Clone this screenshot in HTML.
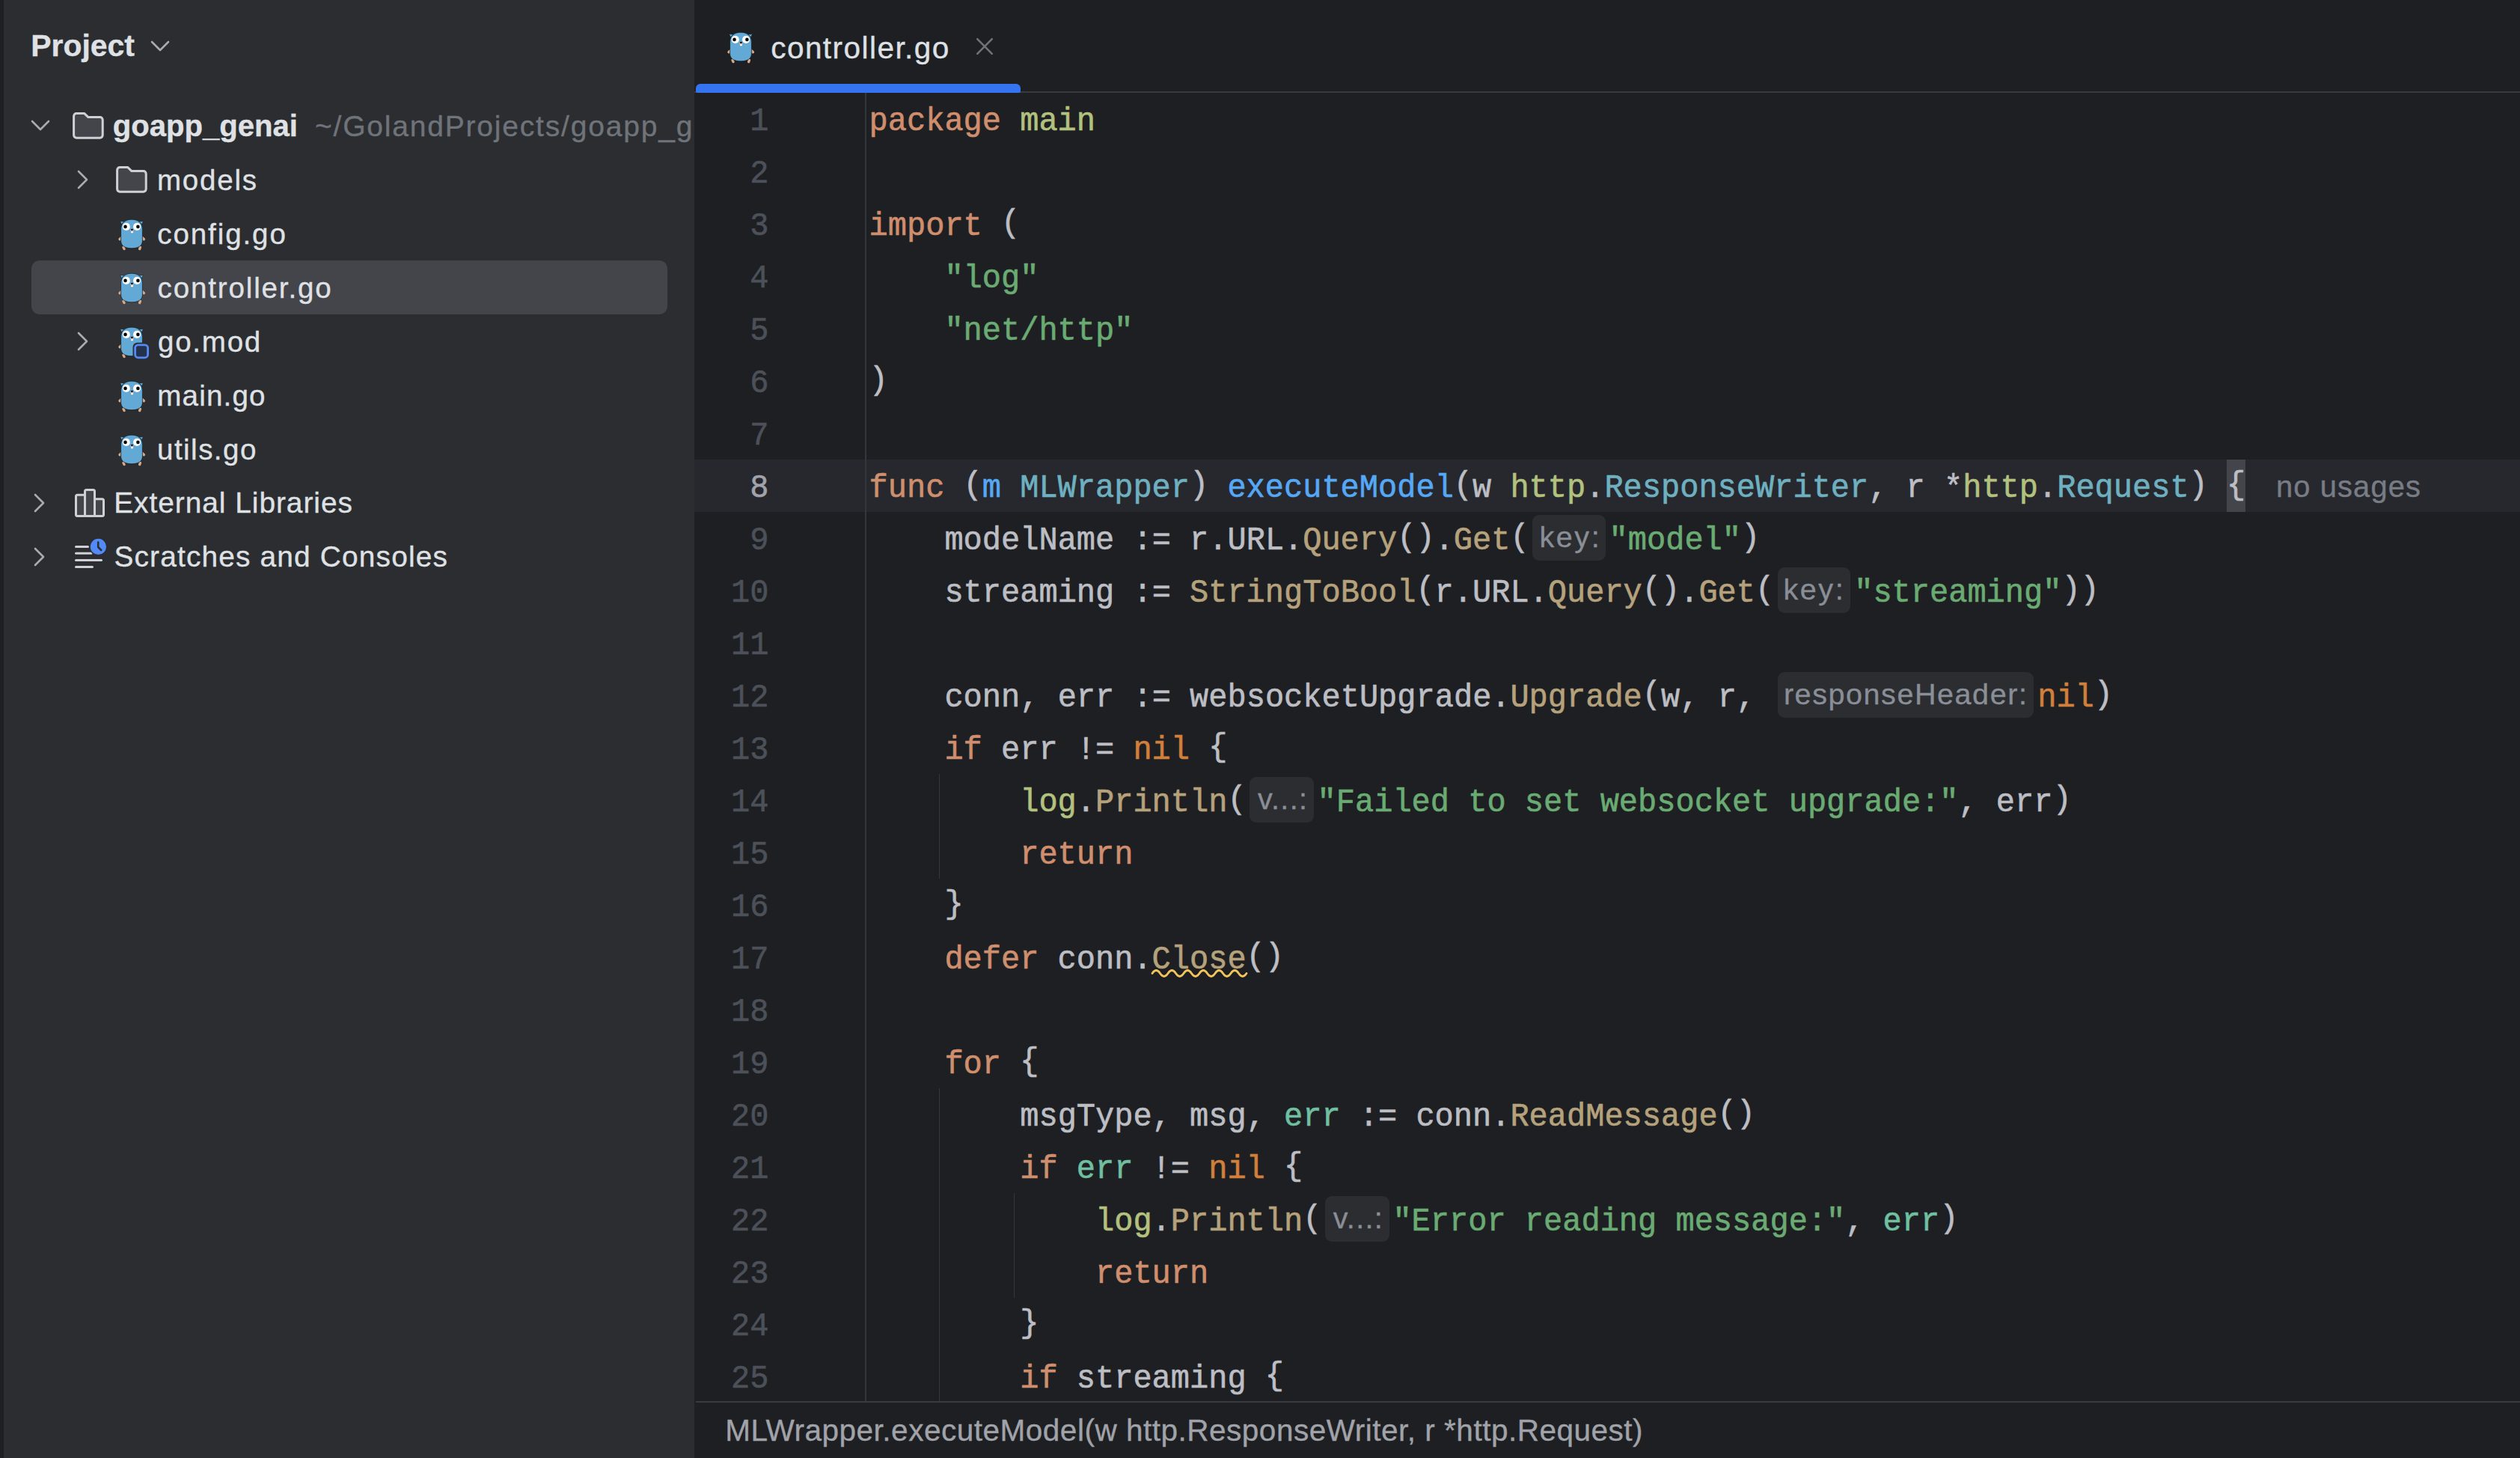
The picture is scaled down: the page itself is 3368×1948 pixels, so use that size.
<!DOCTYPE html>
<html><head><meta charset="utf-8"><style>
*{margin:0;padding:0;box-sizing:border-box}
html,body{width:3368px;height:1948px;overflow:hidden;background:#1E1F22}
body{position:relative;font-family:"Liberation Sans",sans-serif}
.a{position:absolute;white-space:pre}
.m{font-family:"Liberation Mono",monospace;font-size:42px;line-height:42px;-webkit-text-stroke:0.6px currentColor}
.s{font-family:"Liberation Sans",sans-serif;-webkit-text-stroke:0.35px currentColor}
svg{position:absolute;overflow:visible}
</style></head><body>

<div class="a" style="left:0;top:0;width:928px;height:1948px;background:#2B2D30"></div>
<div class="a" style="left:0;top:0;width:5px;height:1948px;background:#1E1F22"></div>
<div class="a s" style="left:41.3px;top:41.37px;font-size:40.9px;line-height:40.9px;color:#DFE1E5;font-weight:bold;">Project</div>
<svg style="left:201px;top:54px" width="26" height="16" viewBox="0 0 26 16"><path d="M2 2 L13 13 L24 2" fill="none" stroke="#A8ABB0" stroke-width="2.6" stroke-linecap="round" stroke-linejoin="round"/></svg>
<div class="a" style="left:42px;top:348px;width:850px;height:72px;border-radius:11px;background:#43454A"></div>
<svg style="left:41px;top:160px" width="26" height="16" viewBox="0 0 26 16"><path d="M2 2 L13 13 L24 2" fill="none" stroke="#A8ABB0" stroke-width="2.6" stroke-linecap="round" stroke-linejoin="round"/></svg>
<svg style="left:97px;top:150px" width="42" height="36" viewBox="0 0 42 36"><path d="M1.6 5.2 a3.6 3.6 0 0 1 3.6 -3.6 H15.8 L21 6.6 H36.6 a3.6 3.6 0 0 1 3.6 3.6 V30.6 a3.6 3.6 0 0 1 -3.6 3.6 H5.2 a3.6 3.6 0 0 1 -3.6 -3.6 Z" fill="#43454A" stroke="#CED0D6" stroke-width="3" stroke-linejoin="round"/></svg>
<div class="a s" style="left:150.8px;top:148.35px;font-size:40.1px;line-height:40.1px;color:#DFE1E5;font-weight:bold;">goapp_genai</div>
<div class="a" style="left:0;top:140px;width:928px;height:60px;overflow:hidden">
<div class="a s" style="left:421.0px;top:9.28px;font-size:39.0px;line-height:39.0px;color:#6F737A;letter-spacing:1.80px;">~/GolandProjects/goapp_genai</div>
</div>
<svg style="left:103px;top:227px" width="16" height="26" viewBox="0 0 16 26"><path d="M2 2 L13 13 L2 24" fill="none" stroke="#A8ABB0" stroke-width="2.6" stroke-linecap="round" stroke-linejoin="round"/></svg>
<svg style="left:155px;top:222px" width="42" height="36" viewBox="0 0 42 36"><path d="M1.6 5.2 a3.6 3.6 0 0 1 3.6 -3.6 H15.8 L21 6.6 H36.6 a3.6 3.6 0 0 1 3.6 3.6 V30.6 a3.6 3.6 0 0 1 -3.6 3.6 H5.2 a3.6 3.6 0 0 1 -3.6 -3.6 Z" fill="#43454A" stroke="#CED0D6" stroke-width="3" stroke-linejoin="round"/></svg>
<div class="a s" style="left:210.0px;top:221.70px;font-size:38.5px;line-height:38.5px;color:#DFE1E5;letter-spacing:1.77px;">models</div>
<svg style="left:158.6px;top:293.3px" width="36" height="42" viewBox="0 0 36 42"><path d="M1.6 2.4 L3.4 6.6 L6.8 3.2 Z M32.4 2.4 L30.6 6.6 L27.2 3.2 Z" fill="#62A9D6" stroke="#14181c" stroke-width="0.5"/><g stroke="#D8A886" stroke-width="3.4" stroke-linecap="round"><path d="M1 26.6 L4.2 23.9"/><path d="M30.2 23.9 L33.4 26.6"/><path d="M6 37.4 L7 39.6"/><path d="M28.4 37.4 L27.6 39.6"/></g><path d="M2.6 13.2 C2.6 4.6 8.8 0.2 17 0.2 C25.2 0.2 31.4 4.6 31.4 13.2 V28.6 C31.4 35.4 26.2 38.8 17 38.8 C7.8 38.8 2.6 35.4 2.6 28.6 Z" fill="#62A9D6" stroke="#14181c" stroke-width="0.7"/><circle cx="9.8" cy="9.9" r="5.1" fill="#fff"/><circle cx="24.1" cy="9.9" r="5.1" fill="#fff"/><circle cx="8.5" cy="9.9" r="2.3" fill="#000"/><circle cx="25.4" cy="9.9" r="2.3" fill="#000"/><rect x="16" y="15.8" width="2.9" height="2.4" fill="#fff"/><ellipse cx="17.4" cy="15.1" rx="2.5" ry="1.4" fill="#D8A886"/><ellipse cx="17.4" cy="13.8" rx="1.5" ry="1.1" fill="#000"/></svg>
<div class="a s" style="left:210.3px;top:293.70px;font-size:38.5px;line-height:38.5px;color:#DFE1E5;letter-spacing:1.91px;">config.go</div>
<svg style="left:158.6px;top:365.3px" width="36" height="42" viewBox="0 0 36 42"><path d="M1.6 2.4 L3.4 6.6 L6.8 3.2 Z M32.4 2.4 L30.6 6.6 L27.2 3.2 Z" fill="#62A9D6" stroke="#14181c" stroke-width="0.5"/><g stroke="#D8A886" stroke-width="3.4" stroke-linecap="round"><path d="M1 26.6 L4.2 23.9"/><path d="M30.2 23.9 L33.4 26.6"/><path d="M6 37.4 L7 39.6"/><path d="M28.4 37.4 L27.6 39.6"/></g><path d="M2.6 13.2 C2.6 4.6 8.8 0.2 17 0.2 C25.2 0.2 31.4 4.6 31.4 13.2 V28.6 C31.4 35.4 26.2 38.8 17 38.8 C7.8 38.8 2.6 35.4 2.6 28.6 Z" fill="#62A9D6" stroke="#14181c" stroke-width="0.7"/><circle cx="9.8" cy="9.9" r="5.1" fill="#fff"/><circle cx="24.1" cy="9.9" r="5.1" fill="#fff"/><circle cx="8.5" cy="9.9" r="2.3" fill="#000"/><circle cx="25.4" cy="9.9" r="2.3" fill="#000"/><rect x="16" y="15.8" width="2.9" height="2.4" fill="#fff"/><ellipse cx="17.4" cy="15.1" rx="2.5" ry="1.4" fill="#D8A886"/><ellipse cx="17.4" cy="13.8" rx="1.5" ry="1.1" fill="#000"/></svg>
<div class="a s" style="left:210.6px;top:365.70px;font-size:38.5px;line-height:38.5px;color:#DFE1E5;letter-spacing:1.86px;">controller.go</div>
<svg style="left:103px;top:443px" width="16" height="26" viewBox="0 0 16 26"><path d="M2 2 L13 13 L2 24" fill="none" stroke="#A8ABB0" stroke-width="2.6" stroke-linecap="round" stroke-linejoin="round"/></svg>
<svg style="left:158.6px;top:437.3px" width="36" height="42" viewBox="0 0 36 42"><path d="M1.6 2.4 L3.4 6.6 L6.8 3.2 Z M32.4 2.4 L30.6 6.6 L27.2 3.2 Z" fill="#62A9D6" stroke="#14181c" stroke-width="0.5"/><g stroke="#D8A886" stroke-width="3.4" stroke-linecap="round"><path d="M1 26.6 L4.2 23.9"/><path d="M30.2 23.9 L33.4 26.6"/><path d="M6 37.4 L7 39.6"/><path d="M28.4 37.4 L27.6 39.6"/></g><path d="M2.6 13.2 C2.6 4.6 8.8 0.2 17 0.2 C25.2 0.2 31.4 4.6 31.4 13.2 V28.6 C31.4 35.4 26.2 38.8 17 38.8 C7.8 38.8 2.6 35.4 2.6 28.6 Z" fill="#62A9D6" stroke="#14181c" stroke-width="0.7"/><circle cx="9.8" cy="9.9" r="5.1" fill="#fff"/><circle cx="24.1" cy="9.9" r="5.1" fill="#fff"/><circle cx="8.5" cy="9.9" r="2.3" fill="#000"/><circle cx="25.4" cy="9.9" r="2.3" fill="#000"/><rect x="16" y="15.8" width="2.9" height="2.4" fill="#fff"/><ellipse cx="17.4" cy="15.1" rx="2.5" ry="1.4" fill="#D8A886"/><ellipse cx="17.4" cy="13.8" rx="1.5" ry="1.1" fill="#000"/><rect x="18.5" y="20.8" width="23" height="23" rx="6" fill="#2B2D30"/><rect x="21.6" y="23.8" width="17" height="17" rx="4" fill="#25324D" stroke="#548AF7" stroke-width="2.8"/></svg>
<div class="a s" style="left:211.0px;top:437.70px;font-size:38.5px;line-height:38.5px;color:#DFE1E5;letter-spacing:1.76px;">go.mod</div>
<svg style="left:158.6px;top:509.29999999999995px" width="36" height="42" viewBox="0 0 36 42"><path d="M1.6 2.4 L3.4 6.6 L6.8 3.2 Z M32.4 2.4 L30.6 6.6 L27.2 3.2 Z" fill="#62A9D6" stroke="#14181c" stroke-width="0.5"/><g stroke="#D8A886" stroke-width="3.4" stroke-linecap="round"><path d="M1 26.6 L4.2 23.9"/><path d="M30.2 23.9 L33.4 26.6"/><path d="M6 37.4 L7 39.6"/><path d="M28.4 37.4 L27.6 39.6"/></g><path d="M2.6 13.2 C2.6 4.6 8.8 0.2 17 0.2 C25.2 0.2 31.4 4.6 31.4 13.2 V28.6 C31.4 35.4 26.2 38.8 17 38.8 C7.8 38.8 2.6 35.4 2.6 28.6 Z" fill="#62A9D6" stroke="#14181c" stroke-width="0.7"/><circle cx="9.8" cy="9.9" r="5.1" fill="#fff"/><circle cx="24.1" cy="9.9" r="5.1" fill="#fff"/><circle cx="8.5" cy="9.9" r="2.3" fill="#000"/><circle cx="25.4" cy="9.9" r="2.3" fill="#000"/><rect x="16" y="15.8" width="2.9" height="2.4" fill="#fff"/><ellipse cx="17.4" cy="15.1" rx="2.5" ry="1.4" fill="#D8A886"/><ellipse cx="17.4" cy="13.8" rx="1.5" ry="1.1" fill="#000"/></svg>
<div class="a s" style="left:210.3px;top:509.70px;font-size:38.5px;line-height:38.5px;color:#DFE1E5;letter-spacing:1.21px;">main.go</div>
<svg style="left:158.6px;top:581.3px" width="36" height="42" viewBox="0 0 36 42"><path d="M1.6 2.4 L3.4 6.6 L6.8 3.2 Z M32.4 2.4 L30.6 6.6 L27.2 3.2 Z" fill="#62A9D6" stroke="#14181c" stroke-width="0.5"/><g stroke="#D8A886" stroke-width="3.4" stroke-linecap="round"><path d="M1 26.6 L4.2 23.9"/><path d="M30.2 23.9 L33.4 26.6"/><path d="M6 37.4 L7 39.6"/><path d="M28.4 37.4 L27.6 39.6"/></g><path d="M2.6 13.2 C2.6 4.6 8.8 0.2 17 0.2 C25.2 0.2 31.4 4.6 31.4 13.2 V28.6 C31.4 35.4 26.2 38.8 17 38.8 C7.8 38.8 2.6 35.4 2.6 28.6 Z" fill="#62A9D6" stroke="#14181c" stroke-width="0.7"/><circle cx="9.8" cy="9.9" r="5.1" fill="#fff"/><circle cx="24.1" cy="9.9" r="5.1" fill="#fff"/><circle cx="8.5" cy="9.9" r="2.3" fill="#000"/><circle cx="25.4" cy="9.9" r="2.3" fill="#000"/><rect x="16" y="15.8" width="2.9" height="2.4" fill="#fff"/><ellipse cx="17.4" cy="15.1" rx="2.5" ry="1.4" fill="#D8A886"/><ellipse cx="17.4" cy="13.8" rx="1.5" ry="1.1" fill="#000"/></svg>
<div class="a s" style="left:210.0px;top:581.70px;font-size:38.5px;line-height:38.5px;color:#DFE1E5;letter-spacing:1.48px;">utils.go</div>
<svg style="left:45px;top:659px" width="16" height="26" viewBox="0 0 16 26"><path d="M2 2 L13 13 L2 24" fill="none" stroke="#A8ABB0" stroke-width="2.6" stroke-linecap="round" stroke-linejoin="round"/></svg>
<svg style="left:100px;top:653px" width="40" height="38" viewBox="0 0 40 38"><g fill="#43454A" stroke="#CED0D6" stroke-width="3" stroke-linejoin="round"><rect x="1.5" y="8.2" width="13" height="28.3" rx="2"/><rect x="25.5" y="13.8" width="13" height="22.7" rx="2"/><rect x="13.5" y="1.5" width="13" height="35" rx="2"/></g></svg>
<div class="a s" style="left:152.2px;top:653.45px;font-size:38.8px;line-height:38.8px;color:#DFE1E5;letter-spacing:0.99px;">External Libraries</div>
<svg style="left:45px;top:731px" width="16" height="26" viewBox="0 0 16 26"><path d="M2 2 L13 13 L2 24" fill="none" stroke="#A8ABB0" stroke-width="2.6" stroke-linecap="round" stroke-linejoin="round"/></svg>
<svg style="left:100px;top:718px" width="44" height="44" viewBox="0 0 44 44"><g stroke="#CED0D6" stroke-width="3" stroke-linecap="round"><path d="M1.5 12.4 H17.5"/><path d="M1.5 21.3 H22"/><path d="M1.5 30.5 H35.5"/><path d="M1.5 39.4 H23.5"/></g><circle cx="31.4" cy="12.4" r="12.2" fill="#2B2D30"/><circle cx="31.4" cy="12.4" r="10.6" fill="#548AF7"/><path d="M31.2 6.5 V13 L35.2 17" fill="none" stroke="#2B2D30" stroke-width="2.6" stroke-linecap="round" stroke-linejoin="round"/></svg>
<div class="a s" style="left:152.4px;top:725.45px;font-size:38.8px;line-height:38.8px;color:#DFE1E5;letter-spacing:1.19px;">Scratches and Consoles</div>
<svg style="left:973px;top:42.5px" width="36" height="42" viewBox="0 0 36 42"><path d="M1.6 2.4 L3.4 6.6 L6.8 3.2 Z M32.4 2.4 L30.6 6.6 L27.2 3.2 Z" fill="#62A9D6" stroke="#14181c" stroke-width="0.5"/><g stroke="#D8A886" stroke-width="3.4" stroke-linecap="round"><path d="M1 26.6 L4.2 23.9"/><path d="M30.2 23.9 L33.4 26.6"/><path d="M6 37.4 L7 39.6"/><path d="M28.4 37.4 L27.6 39.6"/></g><path d="M2.6 13.2 C2.6 4.6 8.8 0.2 17 0.2 C25.2 0.2 31.4 4.6 31.4 13.2 V28.6 C31.4 35.4 26.2 38.8 17 38.8 C7.8 38.8 2.6 35.4 2.6 28.6 Z" fill="#62A9D6" stroke="#14181c" stroke-width="0.7"/><circle cx="9.8" cy="9.9" r="5.1" fill="#fff"/><circle cx="24.1" cy="9.9" r="5.1" fill="#fff"/><circle cx="8.5" cy="9.9" r="2.3" fill="#000"/><circle cx="25.4" cy="9.9" r="2.3" fill="#000"/><rect x="16" y="15.8" width="2.9" height="2.4" fill="#fff"/><ellipse cx="17.4" cy="15.1" rx="2.5" ry="1.4" fill="#D8A886"/><ellipse cx="17.4" cy="13.8" rx="1.5" ry="1.1" fill="#000"/></svg>
<div class="a s" style="left:1030.2px;top:43.91px;font-size:40.5px;line-height:40.5px;color:#DFE1E5;letter-spacing:1.46px;">controller.go</div>
<svg style="left:1303px;top:49px" width="26" height="26" viewBox="0 0 26 26"><path d="M3.2 3.2 L22.8 22.8 M22.8 3.2 L3.2 22.8" stroke="#6F737A" stroke-width="2.6" stroke-linecap="round"/></svg>
<div class="a" style="left:928px;top:122px;width:2440px;height:2px;background:#393B40"></div>
<div class="a" style="left:930px;top:112px;width:434px;height:12px;border-radius:6px 6px 2px 2px;background:#3574F0"></div>
<div class="a" style="left:928px;top:613.7px;width:2440px;height:70px;background:#26282E"></div>
<div class="a" style="left:2976.0px;top:613.7px;width:25px;height:70px;background:#43454A"></div>
<div class="a" style="left:1156.2px;top:124px;width:1.8px;height:1749px;background:#33363B"></div>
<div class="a" style="left:1254.5px;top:1033.7px;width:1.8px;height:140px;background:#33363B"></div>
<div class="a" style="left:1254.5px;top:1453.7px;width:1.8px;height:419.3px;background:#33363B"></div>
<div class="a" style="left:1354.5px;top:1593.7px;width:1.8px;height:140px;background:#33363B"></div>
<div class="a m" style="right:2340.5px;top:142.12px;color:#4B5059;transform:scaleY(1.045);transform-origin:0 32.18px">1</div>
<div class="a m" style="right:2340.5px;top:212.12px;color:#4B5059;transform:scaleY(1.045);transform-origin:0 32.18px">2</div>
<div class="a m" style="right:2340.5px;top:282.12px;color:#4B5059;transform:scaleY(1.045);transform-origin:0 32.18px">3</div>
<div class="a m" style="right:2340.5px;top:352.12px;color:#4B5059;transform:scaleY(1.045);transform-origin:0 32.18px">4</div>
<div class="a m" style="right:2340.5px;top:422.12px;color:#4B5059;transform:scaleY(1.045);transform-origin:0 32.18px">5</div>
<div class="a m" style="right:2340.5px;top:492.12px;color:#4B5059;transform:scaleY(1.045);transform-origin:0 32.18px">6</div>
<div class="a m" style="right:2340.5px;top:562.12px;color:#4B5059;transform:scaleY(1.045);transform-origin:0 32.18px">7</div>
<div class="a m" style="right:2340.5px;top:632.12px;color:#A1A3AB;transform:scaleY(1.045);transform-origin:0 32.18px">8</div>
<div class="a m" style="right:2340.5px;top:702.12px;color:#4B5059;transform:scaleY(1.045);transform-origin:0 32.18px">9</div>
<div class="a m" style="right:2340.5px;top:772.12px;color:#4B5059;transform:scaleY(1.045);transform-origin:0 32.18px">10</div>
<div class="a m" style="right:2340.5px;top:842.12px;color:#4B5059;transform:scaleY(1.045);transform-origin:0 32.18px">11</div>
<div class="a m" style="right:2340.5px;top:912.12px;color:#4B5059;transform:scaleY(1.045);transform-origin:0 32.18px">12</div>
<div class="a m" style="right:2340.5px;top:982.12px;color:#4B5059;transform:scaleY(1.045);transform-origin:0 32.18px">13</div>
<div class="a m" style="right:2340.5px;top:1052.12px;color:#4B5059;transform:scaleY(1.045);transform-origin:0 32.18px">14</div>
<div class="a m" style="right:2340.5px;top:1122.12px;color:#4B5059;transform:scaleY(1.045);transform-origin:0 32.18px">15</div>
<div class="a m" style="right:2340.5px;top:1192.12px;color:#4B5059;transform:scaleY(1.045);transform-origin:0 32.18px">16</div>
<div class="a m" style="right:2340.5px;top:1262.12px;color:#4B5059;transform:scaleY(1.045);transform-origin:0 32.18px">17</div>
<div class="a m" style="right:2340.5px;top:1332.12px;color:#4B5059;transform:scaleY(1.045);transform-origin:0 32.18px">18</div>
<div class="a m" style="right:2340.5px;top:1402.12px;color:#4B5059;transform:scaleY(1.045);transform-origin:0 32.18px">19</div>
<div class="a m" style="right:2340.5px;top:1472.12px;color:#4B5059;transform:scaleY(1.045);transform-origin:0 32.18px">20</div>
<div class="a m" style="right:2340.5px;top:1542.12px;color:#4B5059;transform:scaleY(1.045);transform-origin:0 32.18px">21</div>
<div class="a m" style="right:2340.5px;top:1612.12px;color:#4B5059;transform:scaleY(1.045);transform-origin:0 32.18px">22</div>
<div class="a m" style="right:2340.5px;top:1682.12px;color:#4B5059;transform:scaleY(1.045);transform-origin:0 32.18px">23</div>
<div class="a m" style="right:2340.5px;top:1752.12px;color:#4B5059;transform:scaleY(1.045);transform-origin:0 32.18px">24</div>
<div class="a m" style="right:2340.5px;top:1822.12px;color:#4B5059;transform:scaleY(1.045);transform-origin:0 32.18px">25</div>
<div class="a m" style="left:1161.60px;top:142.12px;color:#CF8E6D;transform:scaleY(1.045);transform-origin:0 32.18px">package</div>
<div class="a m" style="left:1363.20px;top:142.12px;color:#B3C17E;transform:scaleY(1.045);transform-origin:0 32.18px">main</div>
<div class="a m" style="left:1161.60px;top:282.12px;color:#CF8E6D;transform:scaleY(1.045);transform-origin:0 32.18px">import</div>
<div class="a m" style="left:1312.80px;top:282.12px;color:#BCBEC4;transform:scaleY(1.045);transform-origin:0 32.18px"> <span style="position:relative;top:-3.8px">(</span></div>
<div class="a m" style="left:1262.40px;top:352.12px;color:#6AAB73;transform:scaleY(1.045);transform-origin:0 32.18px">&quot;log&quot;</div>
<div class="a m" style="left:1262.40px;top:422.12px;color:#6AAB73;transform:scaleY(1.045);transform-origin:0 32.18px">&quot;net/http&quot;</div>
<div class="a m" style="left:1161.60px;top:492.12px;color:#BCBEC4;transform:scaleY(1.045);transform-origin:0 32.18px"><span style="position:relative;top:-3.8px">)</span></div>
<div class="a m" style="left:1161.60px;top:632.12px;color:#CF8E6D;transform:scaleY(1.045);transform-origin:0 32.18px">func</div>
<div class="a m" style="left:1262.40px;top:632.12px;color:#BCBEC4;transform:scaleY(1.045);transform-origin:0 32.18px"> <span style="position:relative;top:-3.8px">(</span></div>
<div class="a m" style="left:1312.80px;top:632.12px;color:#56A8F5;transform:scaleY(1.045);transform-origin:0 32.18px">m</div>
<div class="a m" style="left:1363.20px;top:632.12px;color:#6FB0C0;transform:scaleY(1.045);transform-origin:0 32.18px">MLWrapper</div>
<div class="a m" style="left:1590.00px;top:632.12px;color:#BCBEC4;transform:scaleY(1.045);transform-origin:0 32.18px"><span style="position:relative;top:-3.8px">)</span> </div>
<div class="a m" style="left:1640.40px;top:632.12px;color:#56A8F5;transform:scaleY(1.045);transform-origin:0 32.18px">executeModel</div>
<div class="a m" style="left:1942.80px;top:632.12px;color:#BCBEC4;transform:scaleY(1.045);transform-origin:0 32.18px"><span style="position:relative;top:-3.8px">(</span>w </div>
<div class="a m" style="left:2018.40px;top:632.12px;color:#B3C17E;transform:scaleY(1.045);transform-origin:0 32.18px">http</div>
<div class="a m" style="left:2119.20px;top:632.12px;color:#BCBEC4;transform:scaleY(1.045);transform-origin:0 32.18px">.</div>
<div class="a m" style="left:2144.40px;top:632.12px;color:#6FB0C0;transform:scaleY(1.045);transform-origin:0 32.18px">ResponseWriter</div>
<div class="a m" style="left:2497.20px;top:632.12px;color:#BCBEC4;transform:scaleY(1.045);transform-origin:0 32.18px">, r *</div>
<div class="a m" style="left:2623.20px;top:632.12px;color:#B3C17E;transform:scaleY(1.045);transform-origin:0 32.18px">http</div>
<div class="a m" style="left:2724.00px;top:632.12px;color:#BCBEC4;transform:scaleY(1.045);transform-origin:0 32.18px">.</div>
<div class="a m" style="left:2749.20px;top:632.12px;color:#6FB0C0;transform:scaleY(1.045);transform-origin:0 32.18px">Request</div>
<div class="a m" style="left:2925.60px;top:632.12px;color:#BCBEC4;transform:scaleY(1.045);transform-origin:0 32.18px"><span style="position:relative;top:-3.8px">)</span> <span style="position:relative;top:-3.8px">{</span></div>
<div class="a m" style="left:1161.60px;top:702.12px;color:#BCBEC4;transform:scaleY(1.045);transform-origin:0 32.18px">    modelName := r.URL.</div>
<div class="a m" style="left:1741.20px;top:702.12px;color:#B5A27C;transform:scaleY(1.045);transform-origin:0 32.18px">Query</div>
<div class="a m" style="left:1867.20px;top:702.12px;color:#BCBEC4;transform:scaleY(1.045);transform-origin:0 32.18px"><span style="position:relative;top:-3.8px">(</span><span style="position:relative;top:-3.8px">)</span>.</div>
<div class="a m" style="left:1942.80px;top:702.12px;color:#B5A27C;transform:scaleY(1.045);transform-origin:0 32.18px">Get</div>
<div class="a m" style="left:2018.40px;top:702.12px;color:#BCBEC4;transform:scaleY(1.045);transform-origin:0 32.18px"><span style="position:relative;top:-3.8px">(</span></div>
<div class="a" style="left:2048.1px;top:688.3px;width:97.7px;height:61px;border-radius:9px;background:#2B2D30"></div>
<div class="a s" style="left:2057.5px;top:699.86px;font-size:39.5px;line-height:39.5px;color:#898E97;position:absolute;margin-top:-1.5px;letter-spacing:2.57px;">key:</div>
<div class="a m" style="left:2150.60px;top:702.12px;color:#6AAB73;transform:scaleY(1.045);transform-origin:0 32.18px">&quot;model&quot;</div>
<div class="a m" style="left:2327.00px;top:702.12px;color:#BCBEC4;transform:scaleY(1.045);transform-origin:0 32.18px"><span style="position:relative;top:-3.8px">)</span></div>
<div class="a m" style="left:1161.60px;top:772.12px;color:#BCBEC4;transform:scaleY(1.045);transform-origin:0 32.18px">    streaming := </div>
<div class="a m" style="left:1590.00px;top:772.12px;color:#B5A27C;transform:scaleY(1.045);transform-origin:0 32.18px">StringToBool</div>
<div class="a m" style="left:1892.40px;top:772.12px;color:#BCBEC4;transform:scaleY(1.045);transform-origin:0 32.18px"><span style="position:relative;top:-3.8px">(</span>r.URL.</div>
<div class="a m" style="left:2068.80px;top:772.12px;color:#B5A27C;transform:scaleY(1.045);transform-origin:0 32.18px">Query</div>
<div class="a m" style="left:2194.80px;top:772.12px;color:#BCBEC4;transform:scaleY(1.045);transform-origin:0 32.18px"><span style="position:relative;top:-3.8px">(</span><span style="position:relative;top:-3.8px">)</span>.</div>
<div class="a m" style="left:2270.40px;top:772.12px;color:#B5A27C;transform:scaleY(1.045);transform-origin:0 32.18px">Get</div>
<div class="a m" style="left:2346.00px;top:772.12px;color:#BCBEC4;transform:scaleY(1.045);transform-origin:0 32.18px"><span style="position:relative;top:-3.8px">(</span></div>
<div class="a" style="left:2375.7px;top:758.3px;width:97.7px;height:61px;border-radius:9px;background:#2B2D30"></div>
<div class="a s" style="left:2383.5px;top:769.86px;font-size:39.5px;line-height:39.5px;color:#898E97;position:absolute;margin-top:-1.5px;letter-spacing:2.57px;">key:</div>
<div class="a m" style="left:2478.20px;top:772.12px;color:#6AAB73;transform:scaleY(1.045);transform-origin:0 32.18px">&quot;streaming&quot;</div>
<div class="a m" style="left:2755.40px;top:772.12px;color:#BCBEC4;transform:scaleY(1.045);transform-origin:0 32.18px"><span style="position:relative;top:-3.8px">)</span><span style="position:relative;top:-3.8px">)</span></div>
<div class="a m" style="left:1161.60px;top:912.12px;color:#BCBEC4;transform:scaleY(1.045);transform-origin:0 32.18px">    conn, err := websocketUpgrade.</div>
<div class="a m" style="left:2018.40px;top:912.12px;color:#B5A27C;transform:scaleY(1.045);transform-origin:0 32.18px">Upgrade</div>
<div class="a m" style="left:2194.80px;top:912.12px;color:#BCBEC4;transform:scaleY(1.045);transform-origin:0 32.18px"><span style="position:relative;top:-3.8px">(</span>w, r, </div>
<div class="a" style="left:2375.7px;top:898.3px;width:342.7px;height:61px;border-radius:9px;background:#2B2D30"></div>
<div class="a s" style="left:2383.9px;top:909.86px;font-size:39.5px;line-height:39.5px;color:#898E97;position:absolute;margin-top:-1.5px;letter-spacing:1.57px;">responseHeader:</div>
<div class="a m" style="left:2723.20px;top:912.12px;color:#D0803A;transform:scaleY(1.045);transform-origin:0 32.18px">nil</div>
<div class="a m" style="left:2798.80px;top:912.12px;color:#BCBEC4;transform:scaleY(1.045);transform-origin:0 32.18px"><span style="position:relative;top:-3.8px">)</span></div>
<div class="a m" style="left:1262.40px;top:982.12px;color:#CF8E6D;transform:scaleY(1.045);transform-origin:0 32.18px">if</div>
<div class="a m" style="left:1312.80px;top:982.12px;color:#BCBEC4;transform:scaleY(1.045);transform-origin:0 32.18px"> err != </div>
<div class="a m" style="left:1514.40px;top:982.12px;color:#D0803A;transform:scaleY(1.045);transform-origin:0 32.18px">nil</div>
<div class="a m" style="left:1590.00px;top:982.12px;color:#BCBEC4;transform:scaleY(1.045);transform-origin:0 32.18px"> <span style="position:relative;top:-3.8px">{</span></div>
<div class="a m" style="left:1363.20px;top:1052.12px;color:#B3C17E;transform:scaleY(1.045);transform-origin:0 32.18px">log</div>
<div class="a m" style="left:1438.80px;top:1052.12px;color:#BCBEC4;transform:scaleY(1.045);transform-origin:0 32.18px">.</div>
<div class="a m" style="left:1464.00px;top:1052.12px;color:#B5A27C;transform:scaleY(1.045);transform-origin:0 32.18px">Println</div>
<div class="a m" style="left:1640.40px;top:1052.12px;color:#BCBEC4;transform:scaleY(1.045);transform-origin:0 32.18px"><span style="position:relative;top:-3.8px">(</span></div>
<div class="a" style="left:1670.1px;top:1038.3px;width:85.7px;height:61px;border-radius:9px;background:#2B2D30"></div>
<div class="a s" style="left:1680.9px;top:1049.86px;font-size:39.5px;line-height:39.5px;color:#898E97;position:absolute;margin-top:-1.5px;letter-spacing:1.34px;">v...:</div>
<div class="a m" style="left:1760.60px;top:1052.12px;color:#6AAB73;transform:scaleY(1.045);transform-origin:0 32.18px">&quot;Failed to set websocket upgrade:&quot;</div>
<div class="a m" style="left:2617.40px;top:1052.12px;color:#BCBEC4;transform:scaleY(1.045);transform-origin:0 32.18px">, err<span style="position:relative;top:-3.8px">)</span></div>
<div class="a m" style="left:1363.20px;top:1122.12px;color:#CF8E6D;transform:scaleY(1.045);transform-origin:0 32.18px">return</div>
<div class="a m" style="left:1161.60px;top:1192.12px;color:#BCBEC4;transform:scaleY(1.045);transform-origin:0 32.18px">    <span style="position:relative;top:-3.8px">}</span></div>
<div class="a m" style="left:1262.40px;top:1262.12px;color:#CF8E6D;transform:scaleY(1.045);transform-origin:0 32.18px">defer</div>
<div class="a m" style="left:1388.40px;top:1262.12px;color:#BCBEC4;transform:scaleY(1.045);transform-origin:0 32.18px"> conn.</div>
<div class="a m" style="left:1539.60px;top:1262.12px;color:#B5A27C;transform:scaleY(1.045);transform-origin:0 32.18px">Close</div>
<div class="a m" style="left:1665.60px;top:1262.12px;color:#BCBEC4;transform:scaleY(1.045);transform-origin:0 32.18px"><span style="position:relative;top:-3.8px">(</span><span style="position:relative;top:-3.8px">)</span></div>
<div class="a m" style="left:1262.40px;top:1402.12px;color:#CF8E6D;transform:scaleY(1.045);transform-origin:0 32.18px">for</div>
<div class="a m" style="left:1338.00px;top:1402.12px;color:#BCBEC4;transform:scaleY(1.045);transform-origin:0 32.18px"> <span style="position:relative;top:-3.8px">{</span></div>
<div class="a m" style="left:1161.60px;top:1472.12px;color:#BCBEC4;transform:scaleY(1.045);transform-origin:0 32.18px">        msgType, msg, </div>
<div class="a m" style="left:1716.00px;top:1472.12px;color:#6FBFA0;transform:scaleY(1.045);transform-origin:0 32.18px">err</div>
<div class="a m" style="left:1791.60px;top:1472.12px;color:#BCBEC4;transform:scaleY(1.045);transform-origin:0 32.18px"> := conn.</div>
<div class="a m" style="left:2018.40px;top:1472.12px;color:#B5A27C;transform:scaleY(1.045);transform-origin:0 32.18px">ReadMessage</div>
<div class="a m" style="left:2295.60px;top:1472.12px;color:#BCBEC4;transform:scaleY(1.045);transform-origin:0 32.18px"><span style="position:relative;top:-3.8px">(</span><span style="position:relative;top:-3.8px">)</span></div>
<div class="a m" style="left:1363.20px;top:1542.12px;color:#CF8E6D;transform:scaleY(1.045);transform-origin:0 32.18px">if</div>
<div class="a m" style="left:1438.80px;top:1542.12px;color:#6FBFA0;transform:scaleY(1.045);transform-origin:0 32.18px">err</div>
<div class="a m" style="left:1514.40px;top:1542.12px;color:#BCBEC4;transform:scaleY(1.045);transform-origin:0 32.18px"> != </div>
<div class="a m" style="left:1615.20px;top:1542.12px;color:#D0803A;transform:scaleY(1.045);transform-origin:0 32.18px">nil</div>
<div class="a m" style="left:1690.80px;top:1542.12px;color:#BCBEC4;transform:scaleY(1.045);transform-origin:0 32.18px"> <span style="position:relative;top:-3.8px">{</span></div>
<div class="a m" style="left:1464.00px;top:1612.12px;color:#B3C17E;transform:scaleY(1.045);transform-origin:0 32.18px">log</div>
<div class="a m" style="left:1539.60px;top:1612.12px;color:#BCBEC4;transform:scaleY(1.045);transform-origin:0 32.18px">.</div>
<div class="a m" style="left:1564.80px;top:1612.12px;color:#B5A27C;transform:scaleY(1.045);transform-origin:0 32.18px">Println</div>
<div class="a m" style="left:1741.20px;top:1612.12px;color:#BCBEC4;transform:scaleY(1.045);transform-origin:0 32.18px"><span style="position:relative;top:-3.8px">(</span></div>
<div class="a" style="left:1770.9px;top:1598.3px;width:85.7px;height:61px;border-radius:9px;background:#2B2D30"></div>
<div class="a s" style="left:1781.7px;top:1609.86px;font-size:39.5px;line-height:39.5px;color:#898E97;position:absolute;margin-top:-1.5px;letter-spacing:1.34px;">v...:</div>
<div class="a m" style="left:1861.40px;top:1612.12px;color:#6AAB73;transform:scaleY(1.045);transform-origin:0 32.18px">&quot;Error reading message:&quot;</div>
<div class="a m" style="left:2466.20px;top:1612.12px;color:#BCBEC4;transform:scaleY(1.045);transform-origin:0 32.18px">, </div>
<div class="a m" style="left:2516.60px;top:1612.12px;color:#6FBFA0;transform:scaleY(1.045);transform-origin:0 32.18px">err</div>
<div class="a m" style="left:2592.20px;top:1612.12px;color:#BCBEC4;transform:scaleY(1.045);transform-origin:0 32.18px"><span style="position:relative;top:-3.8px">)</span></div>
<div class="a m" style="left:1464.00px;top:1682.12px;color:#CF8E6D;transform:scaleY(1.045);transform-origin:0 32.18px">return</div>
<div class="a m" style="left:1161.60px;top:1752.12px;color:#BCBEC4;transform:scaleY(1.045);transform-origin:0 32.18px">        <span style="position:relative;top:-3.8px">}</span></div>
<div class="a m" style="left:1363.20px;top:1822.12px;color:#CF8E6D;transform:scaleY(1.045);transform-origin:0 32.18px">if</div>
<div class="a m" style="left:1413.60px;top:1822.12px;color:#BCBEC4;transform:scaleY(1.045);transform-origin:0 32.18px"> streaming <span style="position:relative;top:-3.8px">{</span></div>
<div class="a s" style="left:3042.0px;top:630.43px;font-size:40.0px;line-height:40.0px;color:#787C85;letter-spacing:1.05px;">no usages</div>
<svg style="left:1540.4px;top:1296.4px" width="130" height="10" viewBox="0 0 130 10"><path d="M0 4.5 q5.25 -8 10.5 0 t10.5 0 q5.25 -8 10.5 0 t10.5 0 q5.25 -8 10.5 0 t10.5 0 q5.25 -8 10.5 0 t10.5 0 q5.25 -8 10.5 0 t10.5 0 q5.25 -8 10.5 0 t10.5 0" fill="none" stroke="#F2C55C" stroke-width="2.8" stroke-linejoin="round" stroke-linecap="round"/></svg>
<div class="a" style="left:928px;top:1873px;width:2440px;height:75px;background:#1E1F22"></div>
<div class="a" style="left:930px;top:1871.8px;width:2438px;height:2px;background:#393B40"></div>
<div class="a s" style="left:969.2px;top:1891.41px;font-size:40.5px;line-height:40.5px;color:#A0A3A9;letter-spacing:0.51px;">MLWrapper.executeModel(w http.ResponseWriter, r *http.Request)</div>
</body></html>
